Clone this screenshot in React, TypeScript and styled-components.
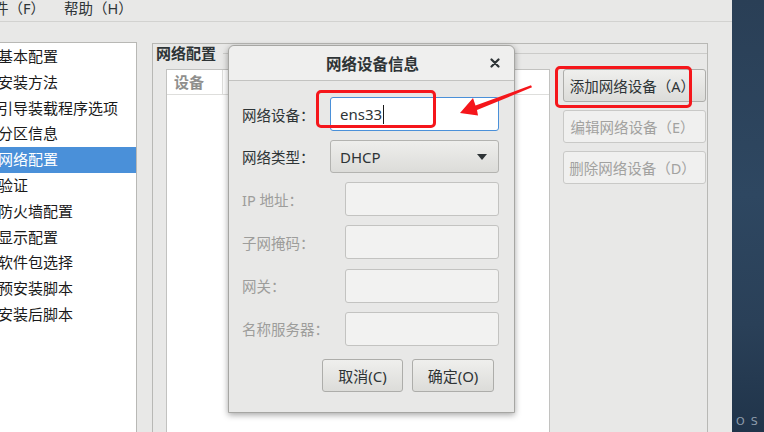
import React from "react";
import styled, { createGlobalStyle } from "styled-components";

const Global = createGlobalStyle`
  html, body { margin: 0; padding: 0; width: 764px; height: 432px; overflow: hidden; }
  body { font-family: "Noto Sans", "Noto Sans CJK SC", sans-serif; background: #e8e8e7; }
  #root { width: 764px; height: 432px; }
`;

const FONT = `"Noto Sans", "Noto Sans CJK SC", sans-serif`;

const Screen = styled.div`
  position: relative;
  width: 764px;
  height: 432px;
  display: flex;
  overflow: hidden;
  font-family: ${FONT};
  color: #2e3436;
`;

const AppWindow = styled.div`
  width: 732px;
  flex: none;
  display: flex;
  flex-direction: column;
  background: #e8e8e7;
`;

const MenuBar = styled.div`
  height: 21px;
  flex: none;
  border-bottom: 1px solid #d2d2d0;
  display: flex;
  gap: 19px;
  margin-left: -6px;
`;

const MenuItem = styled.div`
  font-size: 14.5px;
  line-height: 17px;
  color: #2e3436;
  white-space: nowrap;
`;

const Body = styled.div`
  flex: 1;
  display: flex;
  padding-top: 20px;
  min-height: 0;
`;

const Sidebar = styled.div`
  width: 136px;
  flex: none;
  background: #ffffff;
  border-top: 1px solid #b8b8b5;
  border-right: 1px solid #b8b8b5;
  padding-top: 1px;
  overflow: hidden;
`;

const SideItem = styled.div<{ $active?: boolean }>`
  height: 25.8px;
  line-height: 25.8px;
  font-size: 15px;
  text-indent: -2px;
  white-space: nowrap;
  color: ${(p) => (p.$active ? "#ffffff" : "#1a1a1a")};
  background: ${(p) => (p.$active ? "#4a90d9" : "transparent")};
`;

const MainArea = styled.div`
  flex: 1;
  display: flex;
  padding: 1px 24px 0 15px;
  min-width: 0;
`;

const Panel = styled.div`
  flex: 1;
  display: flex;
  flex-direction: column;
  border: 1px solid #b8b8b5;
  border-bottom: none;
  min-width: 0;
`;

const PanelHeader = styled.div`
  height: 18px;
  display: flex;
  align-items: center;
  flex: none;
`;

const Legend = styled.div`
  font-size: 15px;
  font-weight: 700;
  line-height: 16px;
  padding: 0 3px;
  color: #2e3436;
  white-space: nowrap;
`;

const Rule = styled.div`
  flex: 1;
  height: 1px;
  background: #cbcbc9;
  margin-left: 4px;
`;

const PanelContent = styled.div`
  flex: 1;
  display: flex;
  padding: 7px 0 0 13px;
  min-height: 0;
`;

const Table = styled.div`
  width: 382px;
  flex: none;
  background: #ffffff;
  border: 1px solid #c2c2c0;
  border-bottom: none;
  display: flex;
  flex-direction: column;
`;

const TableHead = styled.div`
  height: 24px;
  display: flex;
  border-bottom: 1px solid #dededc;
`;

const HeadCell = styled.div<{ $w?: number }>`
  width: ${(p) => (p.$w ? `${p.$w}px` : "auto")};
  flex: ${(p) => (p.$w ? "none" : "1")};
  border-right: ${(p) => (p.$w ? "1px solid #dededc" : "none")};
  padding-left: 7px;
  font-size: 15px;
  font-weight: 700;
  line-height: 24px;
  color: #8f8f8d;
  white-space: nowrap;
  overflow: hidden;
`;

const ButtonColumn = styled.div`
  flex: 1;
  display: flex;
  flex-direction: column;
  gap: 8px;
  padding: 0 1px 0 13px;
`;

const SideButton = styled.div<{ $disabled?: boolean }>`
  height: 33px;
  box-sizing: border-box;
  border: 1px solid ${(p) => (p.$disabled ? "#c9c9c7" : "#adadaa")};
  border-radius: 3px;
  background: ${(p) =>
    p.$disabled ? "#f0f0ef" : "linear-gradient(#efefed, #dcdcd9)"};
  color: ${(p) => (p.$disabled ? "#a2a2a0" : "#2e3436")};
  font-size: 14.5px;
  display: flex;
  align-items: center;
  justify-content: center;
  padding-right: 4px;
  white-space: nowrap;
`;

const Desktop = styled.div`
  flex: 1;
  background: linear-gradient(180deg, #2a3f56 0%, #2e4761 45%, #2a4058 75%, #20344a 100%);
  display: flex;
  flex-direction: column;
  justify-content: flex-end;
  padding: 0 0 4px 4px;
`;

const DesktopText = styled.div`
  font-family: "DejaVu Sans", sans-serif;
  font-size: 11px;
  letter-spacing: 6px;
  color: #8e9cab;
  white-space: nowrap;
`;

/* Dialog */
const Dialog = styled.div`
  position: absolute;
  left: 228px;
  top: 45px;
  width: 287px;
  height: 368px;
  box-sizing: border-box;
  border: 1px solid #a6a6a3;
  border-radius: 6px 6px 0 0;
  background: #e8e8e7;
  box-shadow: 0 2px 6px rgba(0, 0, 0, 0.35);
  display: flex;
  flex-direction: column;
`;

const TitleBar = styled.div`
  height: 34px;
  flex: none;
  border-radius: 6px 6px 0 0;
  background: #efefee;
  border-bottom: 1px solid #c3c3c1;
  display: flex;
  align-items: center;
  justify-content: center;
  position: relative;
`;

const Title = styled.div`
  font-size: 15.5px;
  font-weight: 700;
  color: #2e3436;
  padding-left: 2px;
`;

const CloseBtn = styled.div`
  position: absolute;
  right: 14px;
  top: 12px;
  width: 10px;
  height: 10px;
  display: flex;
`;

const DialogBody = styled.div`
  flex: 1;
  padding: 16px 15px 0 13px;
  display: flex;
  flex-direction: column;
`;

const FormGrid = styled.div<{ $label: number; $gap: number }>`
  display: grid;
  grid-template-columns: ${(p) => p.$label}px 1fr;
  row-gap: ${(p) => p.$gap}px;
  align-items: center;
`;

const Label = styled.div<{ $disabled?: boolean }>`
  font-size: 14.5px;
  color: ${(p) => (p.$disabled ? "#9d9d9b" : "#2e3436")};
  white-space: nowrap;
`;

const TextInput = styled.div<{ $disabled?: boolean; $focus?: boolean }>`
  height: 34px;
  box-sizing: border-box;
  border: 1px solid ${(p) => (p.$focus ? "#4a90d9" : "#c3c3c1")};
  border-radius: 3px;
  background: ${(p) => (p.$disabled ? "#f2f2f1" : "#ffffff")};
  display: flex;
  align-items: center;
  padding-left: 9px;
  font-size: 15px;
  color: #2e3436;
`;

const Caret = styled.span`
  display: inline-block;
  width: 1px;
  height: 19px;
  background: #1a1a1a;
  margin-left: 1px;
`;

const Dropdown = styled.div`
  height: 33px;
  box-sizing: border-box;
  border: 1px solid #b3b3b0;
  border-radius: 3px;
  background: linear-gradient(#eeeeec, #dcdcd9);
  display: flex;
  align-items: center;
  justify-content: space-between;
  padding: 0 11px 0 9px;
  font-size: 15px;
  color: #2e3436;
`;

const Spacer = styled.div<{ $h: number }>`
  height: ${(p) => p.$h}px;
  flex: none;
`;

const ButtonRow = styled.div`
  display: flex;
  justify-content: flex-end;
  gap: 9px;
  padding-right: 5px;
  margin-top: 13px;
`;

const DlgButton = styled.div<{ $w: number }>`
  width: ${(p) => p.$w}px;
  height: 33px;
  box-sizing: border-box;
  border: 1px solid #adadaa;
  border-radius: 3px;
  background: linear-gradient(#efefed, #dcdcd9);
  display: flex;
  align-items: center;
  justify-content: center;
  font-size: 15px;
  color: #2e3436;
`;

/* Annotations */
const Highlight = styled.div<{ $x: number; $y: number; $w: number; $h: number }>`
  position: absolute;
  left: ${(p) => p.$x}px;
  top: ${(p) => p.$y}px;
  width: ${(p) => p.$w}px;
  height: ${(p) => p.$h}px;
  box-sizing: border-box;
  border: 3.5px solid #f5161b;
  border-radius: 5px;
  pointer-events: none;
`;

const ArrowSvg = styled.svg`
  position: absolute;
  left: 450px;
  top: 80px;
  width: 90px;
  height: 45px;
  pointer-events: none;
`;

const sideItems = [
  "基本配置",
  "安装方法",
  "引导装载程序选项",
  "分区信息",
  "网络配置",
  "验证",
  "防火墙配置",
  "显示配置",
  "软件包选择",
  "预安装脚本",
  "安装后脚本",
];

export default function App() {
  return (
    <Screen>
      <Global />
      <AppWindow>
        <MenuBar>
          <MenuItem>件（F）</MenuItem>
          <MenuItem>帮助（H）</MenuItem>
        </MenuBar>
        <Body>
          <Sidebar>
            {sideItems.map((s) => (
              <SideItem key={s} $active={s === "网络配置"}>
                {s}
              </SideItem>
            ))}
          </Sidebar>
          <MainArea>
            <Panel>
              <PanelHeader>
                <Legend>网络配置</Legend>
                <Rule />
              </PanelHeader>
              <PanelContent>
                <Table>
                  <TableHead>
                    <HeadCell $w={48}>设备</HeadCell>
                    <HeadCell>网络类型</HeadCell>
                  </TableHead>
                </Table>
                <ButtonColumn>
                  <SideButton>添加网络设备（A）</SideButton>
                  <SideButton $disabled>编辑网络设备（E）</SideButton>
                  <SideButton $disabled>删除网络设备（D）</SideButton>
                </ButtonColumn>
              </PanelContent>
            </Panel>
          </MainArea>
        </Body>
      </AppWindow>
      <Desktop>
        <DesktopText>OS</DesktopText>
      </Desktop>

      <Dialog>
        <TitleBar>
          <Title>网络设备信息</Title>
          <CloseBtn>
            <svg width="10" height="10" viewBox="0 0 10 10">
              <path d="M1.5 1.5 L8.5 8.5 M8.5 1.5 L1.5 8.5" stroke="#2e3436" strokeWidth="2.2" strokeLinecap="round" />
            </svg>
          </CloseBtn>
        </TitleBar>
        <DialogBody>
          <FormGrid $label={88} $gap={9}>
            <Label>网络设备：</Label>
            <TextInput $focus>
              ens33
              <Caret />
            </TextInput>
            <Label>网络类型：</Label>
            <Dropdown>
              <span>DHCP</span>
              <svg width="10" height="6" viewBox="0 0 10 6">
                <path d="M0 0 L10 0 L5 6 Z" fill="#2e3436" />
              </svg>
            </Dropdown>
          </FormGrid>
          <Spacer $h={9} />
          <FormGrid $label={103} $gap={9.3}>
            <Label $disabled>IP 地址：</Label>
            <TextInput $disabled />
            <Label $disabled>子网掩码：</Label>
            <TextInput $disabled />
            <Label $disabled>网关：</Label>
            <TextInput $disabled />
            <Label $disabled>名称服务器：</Label>
            <TextInput $disabled />
          </FormGrid>
          <ButtonRow>
            <DlgButton $w={81}>取消(C)</DlgButton>
            <DlgButton $w={82}>确定(O)</DlgButton>
          </ButtonRow>
        </DialogBody>
      </Dialog>

      <Highlight $x={316} $y={90} $w={120} $h={38} />
      <Highlight $x={555} $y={66} $w={137} $h={42} />
      <ArrowSvg viewBox="0 0 90 45">
        <polygon
          points="10,33 28,35.5 27,30 82,7.3 81,5.3 25.5,25.5 23,18"
          fill="#f5161b"
        />
      </ArrowSvg>
    </Screen>
  );
}
